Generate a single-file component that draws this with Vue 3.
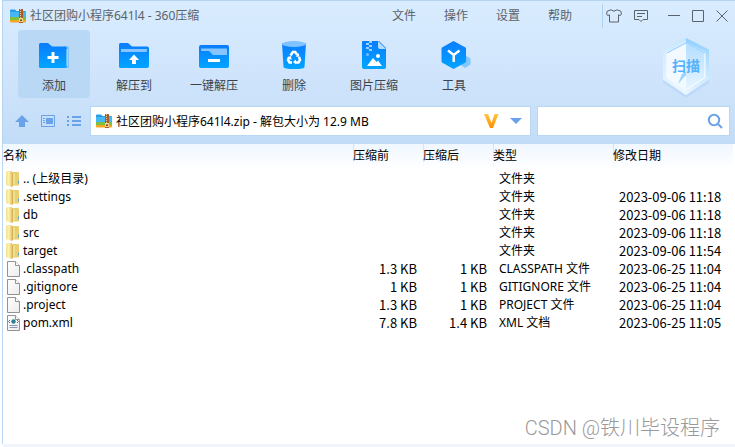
<script setup>
import { ref } from 'vue'

const menus = ['文件', '操作', '设置', '帮助']
const tools = [
  { id: 'add', label: '添加' },
  { id: 'extract', label: '解压到' },
  { id: 'quick', label: '一键解压' },
  { id: 'delete', label: '删除' },
  { id: 'image', label: '图片压缩' },
  { id: 'tools', label: '工具' }
]
const active = ref('add')
const address = ref('社区团购小程序641l4.zip - 解包大小为 12.9 MB')
const keyword = ref('')
const files = [
  { icon: 'folder', name: '.. (上级目录)', before: '', after: '', type: '文件夹', date: '' },
  { icon: 'folder', name: '.settings', before: '', after: '', type: '文件夹', date: '2023-09-06 11:18' },
  { icon: 'folder', name: 'db', before: '', after: '', type: '文件夹', date: '2023-09-06 11:18' },
  { icon: 'folder', name: 'src', before: '', after: '', type: '文件夹', date: '2023-09-06 11:18' },
  { icon: 'folder', name: 'target', before: '', after: '', type: '文件夹', date: '2023-09-06 11:54' },
  { icon: 'file', name: '.classpath', before: '1.3 KB', after: '1 KB', type: 'CLASSPATH 文件', date: '2023-06-25 11:04' },
  { icon: 'file', name: '.gitignore', before: '1 KB', after: '1 KB', type: 'GITIGNORE 文件', date: '2023-06-25 11:04' },
  { icon: 'file', name: '.project', before: '1.3 KB', after: '1 KB', type: 'PROJECT 文件', date: '2023-06-25 11:04' },
  { icon: 'xml', name: 'pom.xml', before: '7.8 KB', after: '1.4 KB', type: 'XML 文档', date: '2023-06-25 11:05' }
]
</script>

<template>
  <div class="window">
    <svg class="defs" aria-hidden="true">
      <defs>
        <linearGradient id="blue" x1="0" y1="0" x2="0" y2="1">
          <stop offset="0" stop-color="#0a7cff" />
          <stop offset="1" stop-color="#00a5ff" />
        </linearGradient>
        <linearGradient id="gold" x1="0" y1="0" x2="1" y2="0">
          <stop offset="0" stop-color="#f3e08c" />
          <stop offset="0.5" stop-color="#fcf3b8" />
          <stop offset="1" stop-color="#e2c25c" />
        </linearGradient>
        <linearGradient id="paper" x1="0" y1="0" x2="1" y2="1">
          <stop offset="0" stop-color="#ffffff" />
          <stop offset="1" stop-color="#ececec" />
        </linearGradient>
        <linearGradient id="vee" x1="0" y1="0" x2="0" y2="1">
          <stop offset="0" stop-color="#ffc83c" />
          <stop offset="1" stop-color="#ff8c00" />
        </linearGradient>
        <linearGradient id="shield" x1="0" y1="0" x2="0" y2="1">
          <stop offset="0" stop-color="#8fd0ff" />
          <stop offset="1" stop-color="#e9f6ff" />
        </linearGradient>
        <linearGradient id="facet" x1="0" y1="0" x2="0" y2="1">
          <stop offset="0" stop-color="#b4deff" />
          <stop offset="1" stop-color="#e8f5ff" />
        </linearGradient>
        <symbol id="archive" viewBox="0 0 16 14">
          <path d="M0 1.500Q0 .5 1 .5h4l1.500 1.500H15q1 0 1 1V5H0z" fill="#2d9be8" />
          <path d="M0 3h16v5H0z" fill="#46b7f5" />
          <path d="M0 8h16v4H0z" fill="#7bc043" />
          <path d="M0 11h16v1.500q0 1-1 1H1q-1 0-1-1z" fill="#f5a623" />
          <path d="M9 0h4v14H9z" fill="#a65f2c" />
          <path d="M10.500 0v9" stroke="#e8c58c" stroke-dasharray="1 1" />
          <path d="M9 9h4v4H9z" fill="#f7d38a" />
          <path d="M10 10.500h2v1.500h-2z" fill="#7a4521" />
        </symbol>
      </defs>
    </svg>

    <header class="chrome">
      <div class="titlebar">
        <svg class="archive"><use href="#archive" /></svg>
        <h1>社区团购小程序641l4 - 360压缩</h1>
        <nav class="menus">
          <button v-for="m in menus" :key="m" type="button">{{ m }}</button>
        </nav>
        <div class="controls">
          <button type="button" aria-label="皮肤">
            <svg width="16" height="14" viewBox="0 0 16 14"><path d="M5 .8 1.200 2.200.6 5l1 1.500 1.900-.6V13h9V5.900l1.900.6 1-1.500-.6-2.800L11 .8Q8 3.600 5 .8z" /></svg>
          </button>
          <button type="button" aria-label="反馈">
            <svg width="14" height="14" viewBox="0 0 14 14"><path d="M.5 1.500h13v9H9L7 12.500l-2-2H.5zM3 4.500h8M3 7.500h5" /></svg>
          </button>
          <button type="button" aria-label="最小化" class="wide">
            <svg width="12" height="12" viewBox="0 0 12 12"><path d="M0 5.500h12" /></svg>
          </button>
          <button type="button" aria-label="最大化">
            <svg width="12" height="12" viewBox="0 0 12 12"><path d="M.5.5h11v11H.5z" /></svg>
          </button>
          <button type="button" aria-label="关闭">
            <svg width="12" height="12" viewBox="0 0 12 12"><path d="m.5.500 11 11m0-11-11 11" /></svg>
          </button>
        </div>
      </div>

      <div class="toolbar">
        <button
          v-for="t in tools"
          :key="t.id"
          type="button"
          class="tool"
          :class="{ active: active === t.id }"
          @click="active = t.id"
        >
          <svg width="34" height="32" viewBox="0 0 34 32">
            <template v-if="t.id === 'add'">
              <path d="M27 5h3q2 0 2 2v19q0 1-1 1h-4z" fill="#7fc3ff" />
              <path d="M2 3.500Q2 2 3.500 2H11l4 3.500h13q2 0 2 2V25q0 2-2 2H3.500Q2 27 2 25.500z" fill="url(#blue)" />
              <path d="M30 8v17" stroke="#c8e4ff" stroke-width="1" />
              <path d="M16 11v11M10.500 16.500h11" stroke="#fff" stroke-width="3" />
            </template>
            <template v-else-if="t.id === 'extract'">
              <path d="M2 3.500Q2 2 3.500 2H11l4 3.500h15q2 0 2 2V25q0 2-2 2H3.500Q2 27 2 25.500z" fill="url(#blue)" />
              <path d="M4 8h26v1.500q0 1.500-1.500 1.500H4z" fill="#86c5ff" />
              <path d="m17 13.500 5 5.500h-3v4h-4v-4h-3z" fill="#fff" />
            </template>
            <template v-else-if="t.id === 'quick'">
              <rect x="2" y="4" width="30" height="23" rx="2" fill="url(#blue)" />
              <path d="M4 7.500h25q1 0 1 1V14H16l-4-4H5q-1 0-1-1z" fill="#86c5ff" />
              <path d="M11 19.500h12" stroke="#fff" stroke-width="3" />
            </template>
            <template v-else-if="t.id === 'delete'">
              <path d="M5 2.500h24L27.500 26q-.2 2-10.500 2T6.500 26z" fill="url(#blue)" />
              <ellipse cx="17" cy="3" rx="12" ry="3" fill="#80c4ff" />
              <g fill="none" stroke="#fff" stroke-width="2.500">
                <path d="m13.500 14.500 2.300-3.500h2.500l2 3" />
                <path d="m22 16 1 3-1.500 2.500H18" />
                <path d="M15 21.500h-2.500L11 19l1.500-3" />
              </g>
              <path d="m19 16 3.500-.5-1-3.500zm0 2.500v5l-3-2.500zM10 16.500l4-1.500.5 4z" fill="#fff" />
            </template>
            <template v-else-if="t.id === 'image'">
              <path d="M5 1q0-1 1-1h16l7 7v19q0 2-2 2H7q-2 0-2-2z" fill="url(#blue)" />
              <path d="M21 0v6q0 2 2 2h6z" fill="#b4dcff" />
              <path d="M12 0h3v2h-3zM9 2h3v2H9zM12 4h3v2h-3zM9 6h3v2H9zM12 8h3v2h-3z" fill="#9cd0ff" />
              <circle cx="10.500" cy="13.500" r="1.500" fill="#70bfff" />
              <circle cx="21" cy="15" r="2" fill="#fff" />
              <path d="m10 25 6-8 3.500 4 1.500-1.500 4 5.500z" fill="#fff" />
            </template>
            <template v-else>
              <path d="m28 14 5.500 3.500v6L28 27l-5-3.500v-6z" fill="#83c7ff" />
              <path d="M16.500 0 28.500 6.500q.5.500.5 1v13q0 .5-.5 1L16.500 28 5 21.500q-.5-.5-.5-1v-13q0-.5.500-1z" fill="url(#blue)" />
              <path d="m11 9.500 5.700 4.500L22.500 9.500M16.700 14v7" fill="none" stroke="#fff" stroke-width="2.500" />
            </template>
          </svg>
          <span>{{ t.label }}</span>
        </button>
        <button type="button" class="scan">
          <svg width="56" height="62" viewBox="0 0 56 62">
            <path d="m28 6 23 11v30L28 62 5 47V17z" fill="#a9cdf5" opacity=".4" />
            <path d="m28 2 23 11.500v30L28 59 5 43.500v-30z" fill="url(#shield)" />
            <path d="M28 2v57L5 43.500v-30z" fill="#f0f8ff" opacity=".6" />
            <path d="m28 7 19 9.500v25L28 54 9 41.500v-25z" fill="url(#facet)" stroke="#fff" />
            <path d="M28 7v47L9 41.500v-25z" fill="#f2f9ff" />
            <path d="M9 17 28 7l19 10" fill="none" stroke="#8fcaff" />
            <path d="M24 38l4-2v3l-8 9z" fill="#9bd3ff" />
          </svg>
          <span class="scan-label">扫描</span>
        </button>
      </div>

      <div class="navbar">
        <div class="views">
          <button type="button" aria-label="上一级">
            <svg width="14" height="14" viewBox="0 0 14 14"><path d="M7 1 14 8h-4v5H4V8H0z" fill="#6aa2ea" /></svg>
          </button>
          <button type="button" aria-label="预览视图">
            <svg width="14" height="14" viewBox="0 0 14 14"><path d="M.5 1.500h13v11H.5z" fill="none" stroke="#6aa2ea" /><path d="M5 4h7v6H5zM2 4h2v1H2zm0 2h2v1H2zm0 2h2v1H2z" fill="#6aa2ea" /></svg>
          </button>
          <button type="button" aria-label="列表视图">
            <svg width="14" height="14" viewBox="0 0 14 14"><path d="M0 2h2v2H0zm5 0h9v2H5zM0 6h2v2H0zm5 0h9v2H5zM0 10h2v2H0zm5 0h9v2H5z" fill="#6aa2ea" /></svg>
          </button>
        </div>
        <div class="field address">
          <svg class="archive"><use href="#archive" /></svg>
          <input v-model="address" type="text" aria-label="路径" />
          <svg width="16" height="16" viewBox="0 0 16 16"><path d="M1 1h4L8.500 10 11.500 1h4L10 15H7z" fill="url(#vee)" /></svg>
          <button type="button" aria-label="展开路径">
            <svg width="12" height="6" viewBox="0 0 12 6"><path d="M0 0h12L6 6z" fill="#6aa2ea" /></svg>
          </button>
        </div>
        <div class="field search">
          <input v-model="keyword" type="text" aria-label="搜索" />
          <button type="button" aria-label="搜索文件">
            <svg width="16" height="16" viewBox="0 0 16 16"><circle cx="7" cy="7" r="5.200" fill="none" stroke="#6aa2ea" stroke-width="2" /><path d="m11 11 4 4" stroke="#6aa2ea" stroke-width="2" /></svg>
          </button>
        </div>
      </div>
    </header>

    <main>
      <table>
        <colgroup>
          <col />
          <col class="col-size" />
          <col class="col-size" />
          <col class="col-type" />
          <col class="col-type" />
        </colgroup>
        <thead>
          <tr>
            <th scope="col">名称</th>
            <th scope="col">压缩前</th>
            <th scope="col">压缩后</th>
            <th scope="col">类型</th>
            <th scope="col">修改日期</th>
          </tr>
        </thead>
        <tbody>
          <tr v-for="f in files" :key="f.name">
            <td>
              <div class="name">
                <svg width="14" height="16" viewBox="0 0 14 16">
                  <template v-if="f.icon === 'folder'">
                    <path d="M5 2.500Q5 1 6.500 1H12q1 0 1 1v12.500H5z" fill="#e9cf72" />
                    <path d="M8 2.500v11" stroke="#fbeeb0" />
                    <path d="M0 1.500Q0 0 1.500 0H5q1 0 1 1v15l-5-1.500q-1 0-1-1z" fill="url(#gold)" />
                    <path d="M6.500 2v13.500" stroke="#d3b254" />
                    <path d="M12.500 9.500v3" stroke="#5ba7cf" />
                  </template>
                  <template v-else>
                    <path d="M1.500.5h8l4 4v11h-12z" fill="url(#paper)" stroke="#939393" />
                    <path d="M9.500.5v4h4" fill="#fff" stroke="#939393" />
                    <template v-if="f.icon === 'xml'">
                      <circle cx="7.500" cy="6.500" r="2.200" fill="#2d7e91" />
                      <path d="m4 5-1.500 1.500L4 8m7-3 1.500 1.500L11 8" fill="none" stroke="#506e8c" />
                      <path d="M3.500 10.500h8m-8 2h8" stroke="#8996b0" />
                    </template>
                  </template>
                </svg>
                <span>{{ f.name }}</span>
              </div>
            </td>
            <td class="num">{{ f.before }}</td>
            <td class="num">{{ f.after }}</td>
            <td>{{ f.type }}</td>
            <td class="date">{{ f.date }}</td>
          </tr>
        </tbody>
      </table>
    </main>
    <footer class="status"></footer>
    <div class="watermark">CSDN @铁川毕设程序</div>
  </div>
</template>

<style>
body {
  margin: 0;
  background: #fff;
}
</style>

<style scoped>
.window {
  position: relative;
  box-sizing: border-box;
  display: flex;
  flex-direction: column;
  min-height: 100vh;
  padding-left: 2px;
  font: 12px/18px "Noto Sans", "Noto Sans CJK SC", sans-serif;
  color: #000;
}
.defs {
  position: absolute;
  width: 0;
  height: 0;
}
button,
input {
  margin: 0;
  padding: 0;
  border: 0;
  background: none;
  font: inherit;
  color: inherit;
}
button {
  display: flex;
  align-items: center;
  justify-content: center;
}
.archive {
  flex: none;
  width: 16px;
  height: 14px;
}
.chrome {
  border-top: 1px solid #b4d3f1;
  border-left: 1px solid #b4d3f1;
  background: linear-gradient(#d9ecff, #d0e5fc 50%, #c2dcf7);
}
.titlebar {
  display: flex;
  align-items: center;
  height: 29px;
  padding: 0 7px;
  color: #5c6269;
}
h1 {
  flex: 1;
  margin: 0 0 0 4px;
  font-size: 12px;
  font-weight: 400;
}
.menus {
  display: flex;
  gap: 28px;
  padding-right: 30px;
}
.controls {
  display: flex;
  align-items: center;
  gap: 12px;
  height: 24px;
  padding-left: 3px;
  border-left: 1px solid #b0d2f2;
}
.controls svg {
  fill: none;
  stroke: #5c6269;
}
.controls .wide {
  margin: 0 0 0 8px;
}
.toolbar {
  display: flex;
  gap: 8px;
  padding: 0 21px 0 15px;
}
.tool {
  flex-direction: column;
  box-sizing: border-box;
  width: 72px;
  height: 68px;
  padding-top: 8px;
  border-radius: 4px;
  color: #3c434b;
}
.tool.active {
  background: #b9d8f6;
}
.tool span {
  margin-top: 4px;
}
.scan {
  position: relative;
  margin-left: auto;
}
.scan svg {
  margin-top: 6px;
}
.scan-label {
  position: absolute;
  inset: 0;
  display: flex;
  align-items: center;
  justify-content: center;
  padding-top: 4px;
  font-size: 14px;
  font-weight: 700;
  color: #52b2fa;
}
.navbar {
  display: flex;
  align-items: center;
  gap: 6px;
  padding: 8px 5px 8px 12px;
}
.views {
  display: flex;
  gap: 12px;
  padding-right: 3px;
}
.field {
  display: flex;
  align-items: center;
  box-sizing: border-box;
  height: 30px;
  min-width: 0;
  border: 1px solid #b9d6f2;
  background: #fff;
}
.field input {
  flex: 1;
  min-width: 0;
  height: 24px;
  outline: 0;
}
.address {
  flex: 427;
  gap: 4px;
  padding: 0 8px 0 5px;
}
.address button {
  margin-left: 7px;
}
.search {
  flex: 179;
  padding: 0 6px;
}
main {
  flex: 1;
  padding-right: 2px;
  border-left: 1px solid #b9d6f2;
}
table {
  width: 100%;
  table-layout: fixed;
  border-collapse: collapse;
}
.col-size {
  width: 70px;
}
.col-type {
  width: 120px;
}
thead {
  background: linear-gradient(#f0f7ff, #fff);
}
th {
  height: 24px;
  padding: 0 0 2px;
  text-align: left;
  font-weight: 400;
}
th + th {
  background: linear-gradient(#cfe2f5, #fff) left / 1px 100% no-repeat;
}
td {
  height: 18px;
  padding: 0 6px;
  white-space: nowrap;
}
td:first-child {
  padding: 0 3px;
}
.name {
  display: flex;
  align-items: center;
  gap: 3px;
}
.num,
.date {
  font-family: "Noto Sans CJK SC", sans-serif;
  font-size: 13px;
}
.num {
  text-align: right;
}
.status {
  height: 3px;
  margin-left: 1px;
  background: #f2f4fb;
}
.watermark {
  position: absolute;
  right: 15px;
  bottom: 5px;
  font: 20px/28px Roboto, "Noto Sans CJK SC", sans-serif;
  font-weight: 300;
  color: #999;
}
</style>
